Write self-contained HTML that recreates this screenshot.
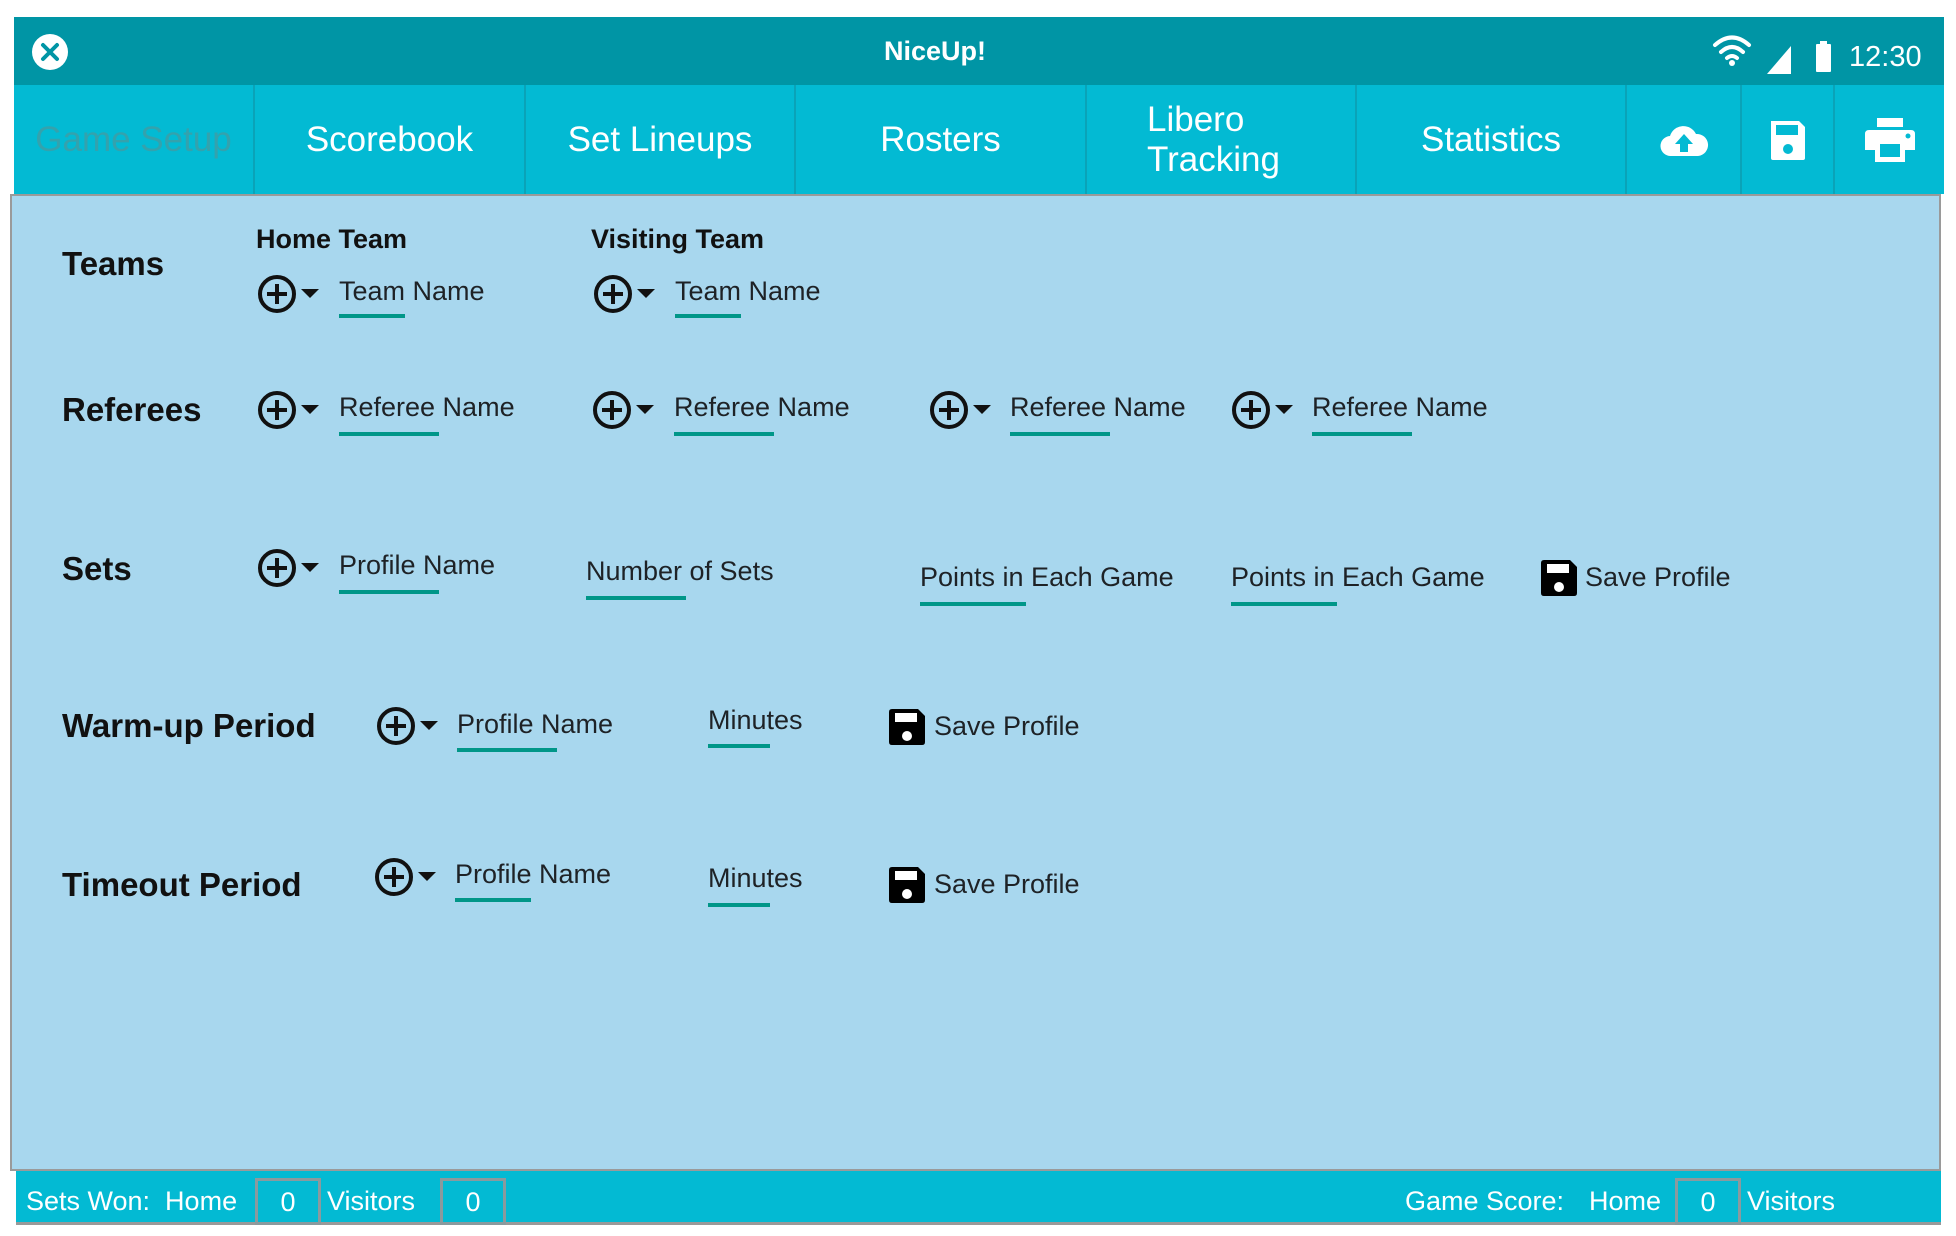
<!DOCTYPE html>
<html><head><meta charset="utf-8"><style>
*{margin:0;padding:0;box-sizing:border-box}
body{width:1956px;height:1236px;background:#fff;position:relative;overflow:hidden;font-family:"Liberation Sans",Arial,sans-serif}
.a{position:absolute;white-space:nowrap}
.t{font-size:27px;color:#1e2226;line-height:34px}
.l{font-size:33px;font-weight:bold;color:#111;line-height:40px}
.u{position:absolute;height:4px;width:100px;background:#009688}
.tab{position:absolute;top:85px;height:109px;color:#fff;font-size:35px;display:flex;align-items:center;justify-content:center;text-align:center;line-height:40px;border-right:2px solid #0aa3b8}
.w{color:#fff;font-size:27px;line-height:34px}
.box{position:absolute;top:1178px;height:47px;width:66px;border:3px solid #8a9a9e;color:#fff;font-size:27px;text-align:center;line-height:42px}
</style></head><body>
<!-- status bar -->
<div class="a" style="left:14px;top:17px;width:1930px;height:68px;background:#0095a5"></div>
<svg class="a" style="left:31px;top:33px" width="38" height="38" viewBox="0 0 38 38"><circle cx="19" cy="19" r="18" fill="#fff"/><path d="M12 12L26 26M26 12L12 26" stroke="#0095a5" stroke-width="4" stroke-linecap="round"/></svg>
<div class="a" style="left:0;width:1870px;top:34px;text-align:center;color:#fff;font-weight:bold;font-size:27px;line-height:34px">NiceUp!</div>
<svg class="a" style="left:1712px;top:34px" width="40" height="34" viewBox="0 0 40 34"><path d="M3 11Q20 -4 37 11" stroke="#fff" stroke-width="4" fill="none" stroke-linecap="round"/><path d="M9 18Q20 8 31 18" stroke="#fff" stroke-width="4" fill="none" stroke-linecap="round"/><path d="M15 24Q20 20 25 24" stroke="#fff" stroke-width="4" fill="none" stroke-linecap="round"/><circle cx="20" cy="29" r="3" fill="#fff"/></svg>
<svg class="a" style="left:1767px;top:46px" width="24" height="28"><path d="M0 28L24 0V28Z" fill="#fff"/></svg>
<div class="a" style="left:1816px;top:44px;width:15px;height:28px;background:#fff;border-radius:1px"></div>
<div class="a" style="left:1820px;top:41px;width:7px;height:4px;background:#fff"></div>
<div class="a w" style="left:1849px;top:40px;font-size:29px">12:30</div>
<!-- tab bar -->
<div class="a" style="left:14px;top:85px;width:1930px;height:109px;background:#03bad3"></div>
<div class="tab" style="left:14px;width:241px;color:#34a2ad">Game Setup</div>
<div class="tab" style="left:255px;width:271px">Scorebook</div>
<div class="tab" style="left:526px;width:270px">Set Lineups</div>
<div class="tab" style="left:796px;width:291px">Rosters</div>
<div class="tab" style="left:1087px;width:270px;justify-content:flex-start;padding-left:60px;text-align:left">Libero<br>Tracking</div>
<div class="tab" style="left:1357px;width:270px">Statistics</div>
<div class="tab" style="left:1627px;width:115px"><svg width="50" height="36" viewBox="0 0 50 36"><path d="M12 34A10 10 0 0 1 11 14A14 14 0 0 1 37 12A11 11 0 0 1 39 34Z" fill="#fff"/><path d="M25 12L16 22H21V30H29V22H34Z" fill="#03bad3"/></svg></div>
<div class="tab" style="left:1742px;width:93px"><svg width="38" height="42" viewBox="0 0 38 42"><path d="M2 2H30L36 8V39Q36 41 34 41H4Q2 41 2 39Z" fill="#fff"/><rect x="7" y="6" width="22" height="10" fill="#03bad3"/><circle cx="19" cy="30" r="5" fill="#03bad3"/></svg></div>
<div class="tab" style="left:1835px;width:109px;border-right:none"><svg width="50" height="44" viewBox="0 0 50 44"><rect x="12" y="0" width="26" height="9" fill="#fff"/><path d="M0 16Q0 12 4 12H46Q50 12 50 16V32H40V44H10V32H0Z" fill="#fff"/><rect x="15" y="26" width="20" height="13" fill="#03bad3"/><circle cx="43" cy="18" r="2.5" fill="#03bad3"/></svg></div>
<!-- content -->
<div class="a" style="left:10px;top:194px;width:1931px;height:977px;background:#a8d7ee;border:2px solid #9a9a9a"></div>

<div class="a l" style="left:62px;top:244px">Teams</div>
<div class="a l" style="left:62px;top:390px">Referees</div>
<div class="a l" style="left:62px;top:549px">Sets</div>
<div class="a l" style="left:62px;top:706px">Warm-up Period</div>
<div class="a l" style="left:62px;top:865px">Timeout Period</div>

<div class="a t" style="left:256px;top:222px;font-weight:bold;color:#111">Home Team</div>
<div class="a t" style="left:591px;top:222px;font-weight:bold;color:#111">Visiting Team</div>

<svg style="display:none"><defs><g id="p"><circle cx="19" cy="19" r="17" stroke="#111" stroke-width="4" fill="none"/><path d="M19 9V29M9 19H29" stroke="#111" stroke-width="4"/><path d="M43 14H61L52 23Z" fill="#111"/></g></defs></svg>
<svg class="a" style="left:258px;top:275px" width="64" height="40"><use href="#p"/></svg>
<svg class="a" style="left:594px;top:275px" width="64" height="40"><use href="#p"/></svg>
<svg class="a" style="left:258px;top:391px" width="64" height="40"><use href="#p"/></svg>
<svg class="a" style="left:593px;top:391px" width="64" height="40"><use href="#p"/></svg>
<svg class="a" style="left:930px;top:391px" width="64" height="40"><use href="#p"/></svg>
<svg class="a" style="left:1232px;top:391px" width="64" height="40"><use href="#p"/></svg>
<svg class="a" style="left:258px;top:549px" width="64" height="40"><use href="#p"/></svg>
<svg class="a" style="left:377px;top:707px" width="64" height="40"><use href="#p"/></svg>
<svg class="a" style="left:375px;top:858px" width="64" height="40"><use href="#p"/></svg>

<div class="a t" style="left:339px;top:274px">Team Name</div><div class="u" style="left:339px;top:314px;width:66px"></div>
<div class="a t" style="left:675px;top:274px">Team Name</div><div class="u" style="left:675px;top:314px;width:66px"></div>

<div class="a t" style="left:339px;top:390px">Referee Name</div><div class="u" style="left:339px;top:432px"></div>
<div class="a t" style="left:674px;top:390px">Referee Name</div><div class="u" style="left:674px;top:432px"></div>
<div class="a t" style="left:1010px;top:390px">Referee Name</div><div class="u" style="left:1010px;top:432px"></div>
<div class="a t" style="left:1312px;top:390px">Referee Name</div><div class="u" style="left:1312px;top:432px"></div>

<div class="a t" style="left:339px;top:548px">Profile Name</div><div class="u" style="left:339px;top:590px"></div>
<div class="a t" style="left:586px;top:554px">Number of Sets</div><div class="u" style="left:586px;top:596px"></div>
<div class="a t" style="left:920px;top:560px">Points in Each Game</div><div class="u" style="left:920px;top:602px;width:106px"></div>
<div class="a t" style="left:1231px;top:560px">Points in Each Game</div><div class="u" style="left:1231px;top:602px;width:106px"></div>

<div class="a t" style="left:457px;top:707px">Profile Name</div><div class="u" style="left:457px;top:748px"></div>
<div class="a t" style="left:708px;top:703px">Minutes</div><div class="u" style="left:708px;top:744px;width:62px"></div>

<div class="a t" style="left:455px;top:857px">Profile Name</div><div class="u" style="left:455px;top:898px;width:76px"></div>
<div class="a t" style="left:708px;top:861px">Minutes</div><div class="u" style="left:708px;top:903px;width:62px"></div>

<svg style="display:none"><defs><g id="s"><path d="M0 3Q0 0 3 0H29L36 7V33Q36 36 33 36H3Q0 36 0 33Z" fill="#000"/><rect x="6" y="4" width="22" height="9" fill="#fff"/><circle cx="18" cy="27" r="5" fill="#fff"/></g></defs></svg>
<svg class="a" style="left:1541px;top:560px" width="36" height="36"><use href="#s"/></svg>
<div class="a t" style="left:1585px;top:560px">Save Profile</div>
<svg class="a" style="left:889px;top:709px" width="36" height="36"><use href="#s"/></svg>
<div class="a t" style="left:934px;top:709px">Save Profile</div>
<svg class="a" style="left:889px;top:867px" width="36" height="36"><use href="#s"/></svg>
<div class="a t" style="left:934px;top:867px">Save Profile</div>

<div class="a" style="left:16px;top:1171px;width:1925px;height:54px;background:#03bad3;border-bottom:3px solid #999"></div>
<div class="a w" style="left:26px;top:1184px">Sets Won:&nbsp; Home</div>
<div class="box" style="left:255px">0</div>
<div class="a w" style="left:327px;top:1184px">Visitors</div>
<div class="box" style="left:440px">0</div>
<div class="a w" style="left:1405px;top:1184px">Game Score:</div>
<div class="a w" style="left:1589px;top:1184px">Home</div>
<div class="box" style="left:1675px">0</div>
<div class="a w" style="left:1747px;top:1184px">Visitors</div>
</body></html>
